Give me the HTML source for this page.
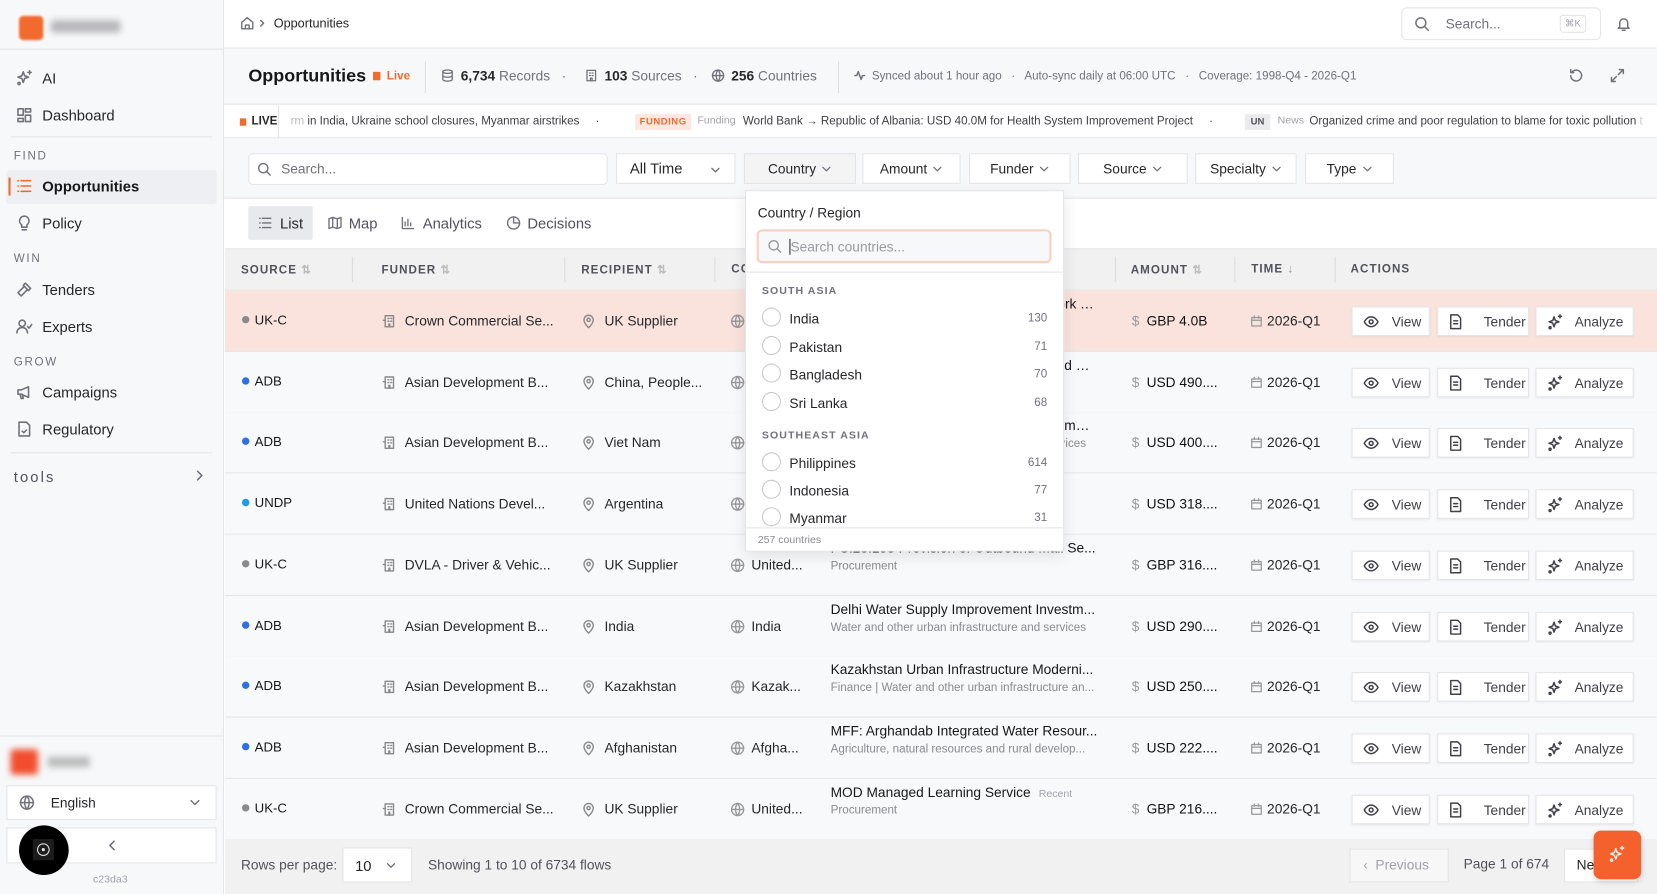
<!DOCTYPE html>
<html><head><meta charset="utf-8">
<style>
*{box-sizing:border-box;margin:0;padding:0}
html,body{width:1657px;height:894px;overflow:hidden;background:#fff}
body{font-family:"Liberation Sans",sans-serif;color:#27272a}
#w{position:absolute;left:0;top:0;width:1568px;height:846px;transform:scale(1.05676);transform-origin:0 0;background:#fff;overflow:hidden}
.a{position:absolute;white-space:nowrap}
svg{position:absolute;fill:none;stroke:currentColor;stroke-width:1.5;stroke-linecap:round;stroke-linejoin:round}
.side{left:0;top:0;width:212px;height:846px;background:#f7f8fa;border-right:1px solid #e4e4e7}
.nav{font-size:14px;color:#27272a;left:40px}
.lbl{font-size:11px;letter-spacing:1.6px;color:#71717a;left:13px}
.ni{color:#71717a}
.th{font-size:11px;font-weight:bold;letter-spacing:1px;color:#52525b;top:249px}
.sep{position:absolute;width:1px;background:#dcdcdf;top:243px;height:24px}
.row{position:absolute;left:213px;width:1355px;height:58px;border-bottom:1px solid #e4e4e7;background:#f8f9fb;font-size:13px}
.row .a{top:21px}
.dot{position:absolute;width:7px;height:7px;border-radius:50%;left:16px;top:24px}
.ab{position:absolute;top:15px;height:28px;background:#fff;border:1px solid #e4e4e7;box-shadow:0 1px 2px rgba(0,0,0,.08);font-size:13px;color:#3f3f46}
.ab span{position:absolute;top:6px}
.cb{position:absolute;left:15px;width:18px;height:18px;border:1px solid #c8c8cc;border-radius:50%;background:#fff}
.ci{position:absolute;left:0;width:300px;height:26px;font-size:13px;color:#27272a}
.ci .n{position:absolute;left:41px;top:3px}
.ci .c{position:absolute;right:15px;top:4px;font-size:11px;color:#71717a}
.fb{position:absolute;top:145px;height:29px;background:#fff;border:1px solid #e4e4e7;font-size:13px;color:#27272a;text-align:center;line-height:27px}
.fb svg{position:static;display:inline-block;vertical-align:middle;margin-left:5px;margin-top:-2px}
.tt{width:254px;overflow:hidden;text-overflow:ellipsis;color:#18181b}
</style></head><body><div id="w">

<div class="a side"></div>
<div class="a" style="left:18px;top:15px;width:23px;height:23px;background:#f26a2e;border-radius:4px;filter:blur(1px)"></div>
<div class="a" style="left:48px;top:19px;width:66px;height:12px;background:#b8b8bc;border-radius:3px;filter:blur(3px)"></div>
<div class="a" style="left:0;top:46px;width:211px;height:1px;background:#e4e4e7"></div>

<svg style="left:15px;top:66px" width="16" height="16" viewBox="0 0 16 16" class="ni"><path d="M7 2l1.3 3.7L12 7l-3.7 1.3L7 12l-1.3-3.7L2 7l3.7-1.3z"/><circle cx="3" cy="13" r="1"/><path d="M13 1v3M11.5 2.5h3"/></svg>
<div class="a nav" style="top:66px">AI</div>
<svg style="left:15px;top:101px" width="16" height="16" viewBox="0 0 16 16" class="ni"><rect x="2" y="2" width="5" height="6"/><rect x="9" y="2" width="5" height="3"/><rect x="9" y="8" width="5" height="6"/><rect x="2" y="11" width="5" height="3"/></svg>
<div class="a nav" style="top:101px">Dashboard</div>
<div class="a" style="left:10px;top:129px;width:191px;height:1px;background:#e4e4e7"></div>
<div class="a lbl" style="top:142px">FIND</div>
<div class="a" style="left:6px;top:161px;width:199px;height:32px;background:#eeeff2;border-radius:3px"></div>
<div class="a" style="left:8px;top:168px;width:2px;height:17px;background:#f26a2e"></div>
<svg style="left:15px;top:168px;color:#f26a2e" width="16" height="16" viewBox="0 0 16 16"><path d="M5 3h9M5 8h9M5 13h9M2 3h.5M2 8h.5M2 13h.5"/></svg>
<div class="a nav" style="top:168px;color:#18181b;font-weight:bold">Opportunities</div>
<svg style="left:15px;top:203px" width="16" height="16" viewBox="0 0 16 16" class="ni"><path d="M8 1.5a4.5 4.5 0 0 0-2.5 8.2V12h5V9.7A4.5 4.5 0 0 0 8 1.5zM6 14.5h4"/></svg>
<div class="a nav" style="top:203px">Policy</div>
<div class="a lbl" style="top:239px">WIN</div>
<svg style="left:15px;top:266px" width="16" height="16" viewBox="0 0 16 16" class="ni"><path d="M9 2l5 5-2 2-5-5zM8 5L2 11l3 3 6-6"/></svg>
<div class="a nav" style="top:266px">Tenders</div>
<svg style="left:15px;top:301px" width="16" height="16" viewBox="0 0 16 16" class="ni"><circle cx="6" cy="5" r="3"/><path d="M1 14c0-3 2-5 5-5s5 2 5 5M11 8l1.5 1.5L15 6"/></svg>
<div class="a nav" style="top:301px">Experts</div>
<div class="a lbl" style="top:337px">GROW</div>
<svg style="left:15px;top:363px" width="16" height="16" viewBox="0 0 16 16" class="ni"><path d="M2 6h3l7-3v10l-7-3H2zM4 10l1 4h2l-1-4"/></svg>
<div class="a nav" style="top:363px">Campaigns</div>
<svg style="left:15px;top:398px" width="16" height="16" viewBox="0 0 16 16" class="ni"><path d="M3 1.5h7l3 3v10H3zM6 10l1.5 1.5L10 9"/></svg>
<div class="a nav" style="top:398px">Regulatory</div>
<div class="a" style="left:10px;top:428px;width:191px;height:1px;background:#e4e4e7"></div>
<div class="a" style="left:13px;top:443px;font-size:14px;letter-spacing:2px;color:#52525b">tools</div>
<svg style="left:183px;top:444px" width="12" height="12" viewBox="0 0 12 12" class="ni"><path d="M4 2l4 4-4 4"/></svg>

<div class="a" style="left:0;top:696px;width:211px;height:1px;background:#e4e4e7"></div>
<div class="a" style="left:10px;top:709px;width:26px;height:24px;background:#f04e2e;border-radius:3px;filter:blur(3px)"></div>
<div class="a" style="left:45px;top:716px;width:40px;height:10px;background:#bbb;filter:blur(3px)"></div>
<div class="a" style="left:6px;top:743px;width:199px;height:33px;background:#fff;border:1px solid #e4e4e7"></div>
<svg style="left:18px;top:752px" width="15" height="15" viewBox="0 0 16 16" class="ni"><circle cx="8" cy="8" r="6.5"/><path d="M1.5 8h13M8 1.5c-3 3.5-3 9.5 0 13M8 1.5c3 3.5 3 9.5 0 13"/></svg>
<div class="a" style="left:48px;top:752px;font-size:13px">English</div>
<svg style="left:179px;top:754px" width="11" height="11" viewBox="0 0 12 12" class="ni"><path d="M2 4l4 4 4-4"/></svg>
<div class="a" style="left:6px;top:783px;width:199px;height:34px;background:#fff;border:1px solid #e4e4e7"></div>
<svg style="left:100px;top:794px" width="12" height="12" viewBox="0 0 12 12" class="ni"><path d="M8 2L4 6l4 4"/></svg>
<div class="a" style="left:18px;top:781px;width:47px;height:47px;border-radius:50%;background:#000"></div>
<div class="a" style="left:31px;top:794px;width:20px;height:20px;background:#1c1c1c"></div>
<svg style="left:34px;top:797px;color:#ddd;stroke-width:1" width="14" height="14" viewBox="0 0 14 14"><circle cx="7" cy="7" r="5.5"/><circle cx="7" cy="7" r="1" fill="#ddd"/></svg>
<div class="a" style="left:88px;top:827px;font-size:10px;color:#a1a1aa">c23da3</div>

<svg style="left:227px;top:15px" width="14" height="14" viewBox="0 0 16 16" class="ni"><path d="M2 7l6-5 6 5v7H2zM6 14v-4h4v4"/></svg>
<svg style="left:244px;top:17px" width="9" height="10" viewBox="0 0 10 10" class="ni"><path d="M3 2l3 3-3 3"/></svg>
<div class="a" style="left:259px;top:15px;font-size:12px;color:#27272a">Opportunities</div>
<div class="a" style="left:1326px;top:7px;width:189px;height:31px;border:1px solid #e4e4e7;border-radius:5px;background:#fff"></div>
<svg style="left:1338px;top:15px" width="15" height="15" viewBox="0 0 16 16" class="ni"><circle cx="7" cy="7" r="5"/><path d="M11 11l3.5 3.5"/></svg>
<div class="a" style="left:1368px;top:15px;font-size:13px;color:#71717a">Search...</div>
<div class="a" style="left:1476px;top:14px;width:25px;height:17px;border:1px solid #e4e4e7;border-radius:3px;font-size:9px;color:#a1a1aa;text-align:center;line-height:15px">⌘K</div>
<svg style="left:1529px;top:15px" width="15" height="15" viewBox="0 0 16 16" class="ni"><path d="M4 11V7a4 4 0 0 1 8 0v4l1.5 1.5h-11zM6.5 14.5h3"/></svg>
<div class="a" style="left:212px;top:45px;width:1356px;height:1px;background:#e4e4e7"></div>

<div class="a" style="left:212px;top:46px;width:1356px;height:53px;background:#f7f8fa;border-bottom:1px solid #e4e4e7"></div>
<div class="a" style="left:235px;top:62px;font-size:17px;font-weight:bold;color:#18181b">Opportunities</div>
<div class="a" style="left:353px;top:68px;width:7px;height:8px;background:#f26a2e"></div>
<div class="a" style="left:366px;top:66px;font-size:11px;font-weight:bold;color:#f26a2e">Live</div>
<div class="a" style="left:402px;top:58px;width:1px;height:30px;background:#e0e0e3"></div>
<svg style="left:417px;top:65px" width="13" height="13" viewBox="0 0 16 16" class="ni"><ellipse cx="8" cy="3.5" rx="5.5" ry="2"/><path d="M2.5 3.5v9c0 1.1 2.5 2 5.5 2s5.5-.9 5.5-2v-9M2.5 8c0 1.1 2.5 2 5.5 2s5.5-.9 5.5-2"/></svg>
<div class="a" style="left:436px;top:64px;font-size:13px;color:#71717a"><b style="color:#27272a">6,734</b> Records &nbsp;&nbsp;·&nbsp;&nbsp;</div>
<svg style="left:553px;top:65px" width="13" height="13" viewBox="0 0 16 16" class="ni"><rect x="3" y="2" width="10" height="12"/><path d="M6 5h1M9 5h1M6 8h1M9 8h1M7 14v-3h2v3"/></svg>
<div class="a" style="left:572px;top:64px;font-size:13px;color:#71717a"><b style="color:#27272a">103</b> Sources &nbsp;&nbsp;·</div>
<svg style="left:673px;top:65px" width="13" height="13" viewBox="0 0 16 16" class="ni"><circle cx="8" cy="8" r="6.5"/><path d="M1.5 8h13M8 1.5c-3 3.5-3 9.5 0 13M8 1.5c3 3.5 3 9.5 0 13"/></svg>
<div class="a" style="left:692px;top:64px;font-size:13px;color:#71717a"><b style="color:#27272a">256</b> Countries</div>
<div class="a" style="left:793px;top:58px;width:1px;height:30px;background:#e0e0e3"></div>
<svg style="left:808px;top:66px" width="11" height="11" viewBox="0 0 12 12" class="ni"><path d="M1 6h2l1.5-4 3 8L9 6h2"/></svg>
<div class="a" style="left:825px;top:66px;font-size:11px;color:#71717a">Synced about 1 hour ago &nbsp;&nbsp;·&nbsp;&nbsp; Auto-sync daily at 06:00 UTC &nbsp;&nbsp;·&nbsp;&nbsp; Coverage: 1998-Q4 - 2026-Q1</div>
<svg style="left:1484px;top:64px" width="15" height="15" viewBox="0 0 16 16" class="ni"><path d="M2.5 8a5.5 5.5 0 1 0 1.6-3.9M2.5 2v3h3"/></svg>
<svg style="left:1523px;top:64px" width="15" height="15" viewBox="0 0 16 16" class="ni"><path d="M10 2h4v4M14 2l-5 5M6 14H2v-4M2 14l5-5"/></svg>

<div class="a" style="left:212px;top:100px;width:1356px;height:31px;background:#fff;border-bottom:1px solid #e4e4e7"></div>
<div class="a" style="left:227px;top:112px;width:6px;height:7px;background:#f26a2e"></div>
<div class="a" style="left:238px;top:109px;font-size:11px;font-weight:bold;color:#27272a">LIVE</div>
<div class="a" style="left:263px;top:100px;width:1px;height:31px;background:#e4e4e7"></div>
<div class="a" style="left:275px;top:109px;font-size:11px;color:#3f3f46"><span style="color:#bbb">rm</span> in India, Ukraine school closures, Myanmar airstrikes &nbsp;&nbsp;&nbsp;&nbsp;·</div>
<div class="a" style="left:601px;top:108px;width:53px;height:15px;background:#fde7e1;color:#f26a2e;font-size:9px;font-weight:bold;text-align:center;line-height:15px;letter-spacing:.5px">FUNDING</div>
<div class="a" style="left:660px;top:109px;font-size:10px;color:#a1a1aa">Funding</div>
<div class="a" style="left:703px;top:109px;font-size:11px;color:#3f3f46">World Bank → Republic of Albania: USD 40.0M for Health System Improvement Project &nbsp;&nbsp;&nbsp;&nbsp;·</div>
<div class="a" style="left:1178px;top:108px;width:24px;height:15px;background:#ebebed;color:#52525b;font-size:9px;font-weight:bold;text-align:center;line-height:15px">UN</div>
<div class="a" style="left:1209px;top:109px;font-size:10px;color:#a1a1aa">News</div>
<div class="a" style="left:1239px;top:109px;font-size:11px;color:#3f3f46">Organized crime and poor regulation to blame for toxic pollution <span style="color:#ccc">t</span></div>

<div class="a" style="left:212px;top:132px;width:1356px;height:56px;background:#f7f8fa;border-bottom:1px solid #e4e4e7"></div>
<div class="a" style="left:235px;top:145px;width:340px;height:30px;background:#fff;border:1px solid #e4e4e7;border-radius:4px"></div>
<svg style="left:243px;top:153px" width="14" height="14" viewBox="0 0 16 16" class="ni"><circle cx="7" cy="7" r="5"/><path d="M11 11l3.5 3.5"/></svg>
<div class="a" style="left:266px;top:152px;font-size:13px;color:#71717a">Search...</div>
<div class="fb" style="left:583px;width:113px;text-align:left;padding-left:12px;font-size:14px">All Time<svg style="position:absolute;left:88px;top:10px;margin:0" width="10" height="10" viewBox="0 0 12 12" class="ni"><path d="M2 4l4 4 4-4"/></svg></div>
<div class="fb" style="left:704px;width:106px;background:#f4f4f5">Country<svg width="10" height="10" viewBox="0 0 12 12" class="ni"><path d="M2 4l4 4 4-4"/></svg></div>
<div class="fb" style="left:816px;width:93px">Amount<svg width="10" height="10" viewBox="0 0 12 12" class="ni"><path d="M2 4l4 4 4-4"/></svg></div>
<div class="fb" style="left:917px;width:96px">Funder<svg width="10" height="10" viewBox="0 0 12 12" class="ni"><path d="M2 4l4 4 4-4"/></svg></div>
<div class="fb" style="left:1020px;width:104px">Source<svg width="10" height="10" viewBox="0 0 12 12" class="ni"><path d="M2 4l4 4 4-4"/></svg></div>
<div class="fb" style="left:1131px;width:96px">Specialty<svg width="10" height="10" viewBox="0 0 12 12" class="ni"><path d="M2 4l4 4 4-4"/></svg></div>
<div class="fb" style="left:1235px;width:84px">Type<svg width="10" height="10" viewBox="0 0 12 12" class="ni"><path d="M2 4l4 4 4-4"/></svg></div>

<div class="a" style="left:235px;top:195px;width:61px;height:32px;background:#e8e9ec;border-radius:2px"></div>
<svg style="left:244px;top:204px" width="14" height="14" viewBox="0 0 16 16" class="ni"><path d="M5 3h9M5 8h9M5 13h9M2 3h.5M2 8h.5M2 13h.5"/></svg>
<div class="a" style="left:265px;top:203px;font-size:14px;color:#27272a">List</div>
<svg style="left:310px;top:204px" width="14" height="14" viewBox="0 0 16 16" class="ni"><path d="M1.5 3.5l4-1.5 5 1.5 4-1.5v10.5l-4 1.5-5-1.5-4 1.5zM5.5 2v10.5M10.5 3.5V14"/></svg>
<div class="a" style="left:330px;top:203px;font-size:14px;color:#52525b">Map</div>
<svg style="left:379px;top:204px" width="14" height="14" viewBox="0 0 16 16" class="ni"><path d="M2 2v12h12M5 11V7M8 11V4M11 11V8"/></svg>
<div class="a" style="left:400px;top:203px;font-size:14px;color:#52525b">Analytics</div>
<svg style="left:479px;top:204px" width="14" height="14" viewBox="0 0 16 16" class="ni"><circle cx="8" cy="8" r="6.5"/><path d="M8 1.5V8h6.5"/></svg>
<div class="a" style="left:499px;top:203px;font-size:14px;color:#52525b">Decisions</div>

<div class="a" style="left:213px;top:235px;width:1355px;height:40px;background:#f1f1f2;border-top:1px solid #e4e4e7;border-bottom:1px solid #e4e4e7"></div>
<div class="a th" style="left:228px">SOURCE <span style="color:#bbb">⇅</span></div><div class="sep" style="left:333px"></div>
<div class="a th" style="left:361px">FUNDER <span style="color:#bbb">⇅</span></div><div class="sep" style="left:534px"></div>
<div class="a th" style="left:550px">RECIPIENT <span style="color:#bbb">⇅</span></div><div class="sep" style="left:676px"></div>
<div class="a th" style="left:692px">COUNTRY</div>
<div class="sep" style="left:1055px"></div>
<div class="a th" style="left:1070px">AMOUNT <span style="color:#bbb">⇅</span></div><div class="sep" style="left:1168px"></div>
<div class="a th" style="left:1184px">TIME <span style="color:#999">↓</span></div><div class="sep" style="left:1263px"></div>
<div class="a th" style="left:1278px">ACTIONS</div>

<div id="rows"></div>
<script>
var R=[
["#8a8a8a","UK-C","Crown Commercial Se...","UK Supplier","United...","Crown Commercial Services Framework Technology Comm...","",'GBP 4.0B',1],
["#2f6fe4","ADB","Asian Development B...","China, People...","China...","Sichuan Urban Infrastructure Integrated Development Integr...","Transport",'USD 490....',0],
["#2f6fe4","ADB","Asian Development B...","Viet Nam","Viet Nam","Secondary Cities Development Programme Central China...","Water and other urban infrastructure and services",'USD 400....',0],
["#1a9be8","UNDP","United Nations Devel...","Argentina","Argen...","","",'USD 318....',0],
["#8a8a8a","UK-C","DVLA - Driver &amp; Vehic...","UK Supplier","United...","PS.23.193 Provision of Outbound Mail Se...","Procurement",'GBP 316....',0],
["#2f6fe4","ADB","Asian Development B...","India","India","Delhi Water Supply Improvement Investm...","Water and other urban infrastructure and services",'USD 290....',0],
["#2f6fe4","ADB","Asian Development B...","Kazakhstan","Kazak...","Kazakhstan Urban Infrastructure Moderni...","Finance | Water and other urban infrastructure an...",'USD 250....',0],
["#2f6fe4","ADB","Asian Development B...","Afghanistan","Afgha...","MFF: Arghandab Integrated Water Resour...","Agriculture, natural resources and rural develop...",'USD 222....',0],
["#8a8a8a","UK-C","Crown Commercial Se...","UK Supplier","United...","MOD Managed Learning Service <span style=\"font-size:10px;color:#a1a1aa;margin-left:4px\">Recent</span>","Procurement",'GBP 216....',0]];
var bld='<svg style="left:148px;top:22px;color:#888" width="14" height="14" viewBox="0 0 16 16"><rect x="4" y="2" width="9" height="12"/><path d="M2 7h2M7 5h1M10 5h1M7 8h1M10 8h1M8 14v-3h1v3"/></svg>';
var pin='<svg style="left:337px;top:22px;color:#888" width="14" height="14" viewBox="0 0 16 16"><path d="M8 15s5-4.5 5-8.5a5 5 0 0 0-10 0C3 10.5 8 15 8 15z"/><circle cx="8" cy="6.5" r="1.8"/></svg>';
var glb='<svg style="left:478px;top:22px;color:#999" width="14" height="14" viewBox="0 0 16 16"><circle cx="8" cy="8" r="6.5"/><path d="M1.5 8h13M8 1.5c-3 3.5-3 9.5 0 13M8 1.5c3 3.5 3 9.5 0 13"/></svg>';
var cal='<svg style="left:970px;top:23px;color:#999;stroke-width:1.2" width="12" height="12" viewBox="0 0 12 12"><rect x="1.5" y="2.5" width="9" height="8"/><path d="M1.5 5h9M4 1v2M8 1v2"/></svg>';
var eye='<svg style="left:10px;top:7px;color:#3f3f46" width="15" height="13" viewBox="0 0 16 14"><path d="M1 7s2.5-5 7-5 7 5 7 5-2.5 5-7 5-7-5-7-5z"/><circle cx="8" cy="7" r="2"/></svg>';
var doc='<svg style="left:10px;top:6px;color:#3f3f46" width="13" height="15" viewBox="0 0 14 16"><path d="M2 1h7l3 3v11H2zM5 7h4M5 10h4"/></svg>';
var spk='<svg style="left:10px;top:6px;color:#3f3f46" width="15" height="15" viewBox="0 0 16 16"><path d="M7 3l1.3 3.7L12 8l-3.7 1.3L7 13l-1.3-3.7L2 8l3.7-1.3z"/><circle cx="3" cy="14" r="1"/><path d="M13 1v3M11.5 2.5h3"/></svg>';
var h='';
for(var i=0;i<R.length;i++){var r=R[i];var t=275+i*57.7;
h+='<div class="row" style="top:'+t+'px;'+(r[8]?'background:#fae3dd;':'')+'">';
h+='<div class="dot" style="background:'+r[0]+'"></div><div class="a" style="left:28px;font-size:12.5px;color:#18181b">'+r[1]+'</div>';
h+=bld+'<div class="a" style="left:170px">'+r[2]+'</div>';
h+=pin+'<div class="a" style="left:359px">'+r[3]+'</div>';
h+=glb+'<div class="a" style="left:498px">'+r[4]+'</div>';
if(r[6]){h+='<div class="a tt" style="left:573px;top:5px">'+r[5]+'</div><div class="a tt" style="left:573px;top:24px;font-size:11px;color:#8a8a90">'+r[6]+'</div>';}
else if(r[5]){h+='<div class="a tt" style="left:573px;top:5px">'+r[5]+'</div>';}
h+='<div class="a" style="left:858px;color:#999">$</div><div class="a" style="left:872px;color:#111">'+r[7]+'</div>';
h+=cal+'<div class="a" style="left:986px">2026-Q1</div>';
h+='<div class="ab" style="left:1066px;width:74px">'+eye+'<span style="left:37px">View</span></div>';
h+='<div class="ab" style="left:1147px;width:87px">'+doc+'<span style="left:43px">Tender</span></div>';
h+='<div class="ab" style="left:1240px;width:93px">'+spk+'<span style="left:36px">Analyze</span></div>';
h+='</div>';}
document.getElementById('rows').innerHTML=h;
</script>

<div class="a" style="left:213px;top:794px;width:1355px;height:52px;background:#f1f1f2"></div>
<div class="a" style="left:228px;top:811px;font-size:13px;color:#52525b">Rows per page:</div>
<div class="a" style="left:324px;top:802px;width:66px;height:33px;background:#fff;border:1px solid #e4e4e7"></div>
<div class="a" style="left:336px;top:811px;font-size:14px">10</div>
<svg style="left:365px;top:814px" width="10" height="10" viewBox="0 0 12 12" class="ni"><path d="M2 4l4 4 4-4"/></svg>
<div class="a" style="left:405px;top:811px;font-size:13px;color:#52525b">Showing 1 to 10 of 6734 flows</div>
<div class="a" style="left:1277px;top:803px;width:94px;height:32px;background:#f7f7f8;border:1px solid #e4e4e7"></div>
<div class="a" style="left:1290px;top:811px;font-size:13px;color:#a1a1aa">‹ &nbsp;Previous</div>
<div class="a" style="left:1385px;top:810px;font-size:13px;color:#52525b">Page 1 of 674</div>
<div class="a" style="left:1480px;top:803px;width:70px;height:32px;background:#fff;border:1px solid #e4e4e7"></div>
<div class="a" style="left:1492px;top:811px;font-size:13px;color:#27272a">Next</div>
<div class="a" style="left:1508px;top:786px;width:45px;height:46px;background:#f4612d;border-radius:7px;box-shadow:0 2px 6px rgba(0,0,0,.15)"></div>
<svg style="left:1522px;top:800px;color:#fff;stroke-width:1.2" width="16" height="16" viewBox="0 0 16 16"><path d="M7 3l1.3 3.7L12 8l-3.7 1.3L7 13l-1.3-3.7L2 8l3.7-1.3z"/><circle cx="3" cy="14" r="1"/><path d="M13 1v3M11.5 2.5h3"/></svg>

<div class="a" style="left:705px;top:180px;width:302px;height:342px;background:#fff;border:1px solid #e4e4e7;box-shadow:0 4px 14px rgba(0,0,0,.1);overflow:hidden">
 <div class="a" style="left:11px;top:13px;font-size:13px;color:#27272a">Country / Region</div>
 <div class="a" style="left:10px;top:36px;width:279px;height:32px;border:2px solid #f8cfc0;border-radius:5px;background:#f7f8fa"></div>
 <svg style="left:20px;top:45px;color:#999" width="14" height="14" viewBox="0 0 16 16"><circle cx="7" cy="7" r="5"/><path d="M11 11l3.5 3.5"/></svg>
 <div class="a" style="left:41px;top:45px;width:1px;height:15px;background:#27272a"></div>
 <div class="a" style="left:42px;top:45px;font-size:13px;color:#9a9aa0">Search countries...</div>
 <div class="a" style="left:0;top:76px;width:302px;height:1px;background:#e4e4e7"></div>
 <div class="a" style="left:15px;top:89px;font-size:10px;font-weight:bold;letter-spacing:1px;color:#71717a">SOUTH ASIA</div>
 <div class="ci" style="top:110px"><div class="cb" style="top:0"></div><span class="n">India</span><span class="c">130</span></div>
 <div class="ci" style="top:137px"><div class="cb" style="top:0"></div><span class="n">Pakistan</span><span class="c">71</span></div>
 <div class="ci" style="top:163px"><div class="cb" style="top:0"></div><span class="n">Bangladesh</span><span class="c">70</span></div>
 <div class="ci" style="top:190px"><div class="cb" style="top:0"></div><span class="n">Sri Lanka</span><span class="c">68</span></div>
 <div class="a" style="left:15px;top:226px;font-size:10px;font-weight:bold;letter-spacing:1px;color:#71717a">SOUTHEAST ASIA</div>
 <div class="ci" style="top:247px"><div class="cb" style="top:0"></div><span class="n">Philippines</span><span class="c">614</span></div>
 <div class="ci" style="top:273px"><div class="cb" style="top:0"></div><span class="n">Indonesia</span><span class="c">77</span></div>
 <div class="ci" style="top:299px"><div class="cb" style="top:0"></div><span class="n">Myanmar</span><span class="c">31</span></div>
 <div class="a" style="left:0;top:318px;width:302px;height:24px;background:#fff;border-top:1px solid #e4e4e7"></div>
 <div class="a" style="left:11px;top:325px;font-size:10px;color:#8a8a90">257 countries</div>
</div>

</div></body></html>
